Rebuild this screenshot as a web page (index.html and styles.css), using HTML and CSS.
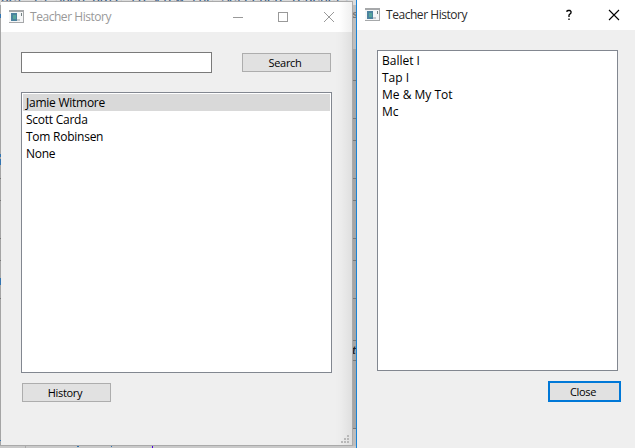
FILE: index.html
```
<!DOCTYPE html>
<html lang="en">
<head>
<meta charset="utf-8">
<title>Teacher History</title>
<link rel="stylesheet" href="styles.css">
</head>
<body>
<svg class="backdrop" width="635" height="448" viewBox="0 0 635 448" shape-rendering="crispEdges">
  <rect width="635" height="448" fill="#a5a5a5"/>
  <rect width="356" height="5" fill="#dcdcdc"/>
  <rect x="352" y="5" width="4" height="44" fill="#bdbdbd"/>
  <rect x="0" y="446" width="356" height="2" fill="#c9c9c9"/>
  <rect x="353" y="429" width="3" height="17" fill="#bcbcbc"/>
  <text class="backdrop-text" x="1" y="3" textLength="350">act is such date to view the Screened Teacher.</text>
  <path d="M352 80.500h4M352 118.500h4M352 140.500h4M352 178.500h4M352 200.500h4M352 238.500h4M352 260.500h4M352 298.500h4M352 340.500h4M352 360.500h4M352 428.500h4M0 178.500h1M0 200.500h1M0 238.500h1M0 260.500h1M0 298.500h1" stroke="#777"/>
  <path d="M0 14h1v4h-1zM0 154h1v3h-1zM0 159h1v6h-1zM0 278h1v7h-1zM0 440h1v1h-1zM77 446h2v1h-2zM111 446h1v1h-1z" fill="#3274b0"/>
  <rect x="152" y="446" width="1" height="2" fill="#5000e0"/>
  <rect x="25" y="446" width="1" height="2" fill="#aaa"/>
  <text class="backdrop-mark" x="352" y="354">t</text>
  <text class="backdrop-mark faint" x="352" y="18">s</text>
</svg>

<section class="window search-window">
  <header class="titlebar">
    <svg class="app-icon" width="16" height="13" viewBox="0 0 16 13" shape-rendering="crispEdges">
      <rect width="15" height="13" fill="#a6a8aa"/><rect y="2" width="14" height="10" fill="#f5f6f7"/>
      <rect x="2" y="3" width="6" height="8" fill="#4b829e"/><path d="M4 5h3v4H4z" fill="#56a59b"/><path d="M8 9h3v2H8z" fill="#c6cacd"/><path d="M12 3h1v3h-1z" fill="#718081"/>
    </svg>
    <h1 class="title">Teacher History</h1>
    <svg class="controls" width="103" height="12" viewBox="0 0 103 12" fill="none" stroke="currentColor">
      <path d="M0 6.500h10"/><rect x="45.500" y="1.500" width="9" height="9"/><path d="M91 1l10 10M101 1l-10 10"/>
    </svg>
  </header>
  <div class="search-row">
    <input class="search-field" type="text" aria-label="Teacher name">
    <button class="button search-button">Search</button>
  </div>
  <ul class="list teacher-list">
    <li class="item selected">Jamie Witmore</li>
    <li class="item">Scott Carda</li>
    <li class="item">Tom Robinsen</li>
    <li class="item">None</li>
  </ul>
  <button class="button history-button">History</button>
  <svg class="size-grip" width="9" height="8" viewBox="0 0 9 8" fill="#b8b8b8" shape-rendering="crispEdges">
    <path d="M6 0h2v2H6zM3 3h2v2H3zM6 3h2v2H6zM0 6h2v2H0zM3 6h2v2H3zM6 6h2v2H6z"/>
  </svg>
</section>

<section class="window history-window">
  <header class="titlebar">
    <svg class="app-icon" width="16" height="13" viewBox="0 0 16 13" shape-rendering="crispEdges">
      <rect width="15" height="13" fill="#a6a8aa"/><rect y="2" width="14" height="10" fill="#f5f6f7"/>
      <rect x="2" y="3" width="6" height="8" fill="#4b829e"/><path d="M4 5h3v4H4z" fill="#56a59b"/><path d="M8 9h3v2H8z" fill="#c6cacd"/><path d="M12 3h1v3h-1z" fill="#718081"/>
    </svg>
    <h1 class="title">Teacher History</h1>
    <svg class="controls" width="54" height="12" viewBox="0 0 54 12" fill="none" stroke="currentColor">
      <path d="M1 3V2L2 1.500H4L5 2.500V4L3 6V8M3 9.500V11" stroke-width="1.300"/>
      <path d="M43 1l10 10M53 1l-10 10" stroke-width="1.100"/>
    </svg>
  </header>
  <ul class="list class-list">
    <li class="item">Ballet I</li>
    <li class="item">Tap I</li>
    <li class="item">Me &amp; My Tot</li>
    <li class="item">Mc</li>
  </ul>
  <button class="button close-button">Close</button>
</section>
</body>
</html>
```
FILE: styles.css
```
* { box-sizing: border-box; }
body {
  margin: 0;
  width: 635px;
  height: 448px;
  position: relative;
  overflow: hidden;
  font-family: "Open Sans", sans-serif;
  font-size: 12px;
  color: #000;
}
.backdrop { display: block; }
.backdrop-text { font: 14px "Liberation Mono", monospace; fill: #365b86; }
.backdrop-mark { font: italic bold 11px "Liberation Sans", sans-serif; fill: #222; }
.faint { fill: #777; }
.window {
  position: absolute;
  display: flex;
  flex-direction: column;
  background: #efefef;
}
.search-window {
  left: 1px;
  top: 1px;
  width: 352px;
  height: 445px;
  border: solid #aaa;
  border-width: 1px 1px 1px 0;
  background: linear-gradient(90deg, #efefef 334px, #ececec 340px, #dfdfdf 351px);
}
.history-window {
  left: 356px;
  top: 0;
  width: 279px;
  height: 448px;
  border-left: 1px solid #1883d7;
}
.titlebar {
  display: flex;
  align-items: center;
  height: 30px;
  padding-left: 8px;
  padding-bottom: 1px;
  background: #fff;
  color: #2b2b2b;
}
.search-window .titlebar {
  color: #999;
  background: linear-gradient(90deg, #fff 338px, #efefef 351px);
}
.title {
  margin: 0 0 0 5px;
  font: 12px "Open Sans", sans-serif;
  letter-spacing: -0.45px;
  white-space: nowrap;
}
.controls { margin-left: auto; }
.search-window .controls { margin-right: 16px; }
.history-window .controls { margin-right: 15px; color: #000; }
.search-row {
  display: flex;
  align-items: center;
  justify-content: space-between;
  margin: 20px 21px 0 20px;
}
.search-field {
  width: 191px;
  height: 21px;
  padding: 0 4px;
  border: 1px solid #7a7a7a;
  background: #fff;
}
.button {
  display: flex;
  align-items: center;
  justify-content: center;
  height: 19px;
  padding: 0 3px 0 0;
  border: 1px solid #adadad;
  background: #e1e1e1;
  color: #000;
  font: 11px "Open Sans", sans-serif;
  letter-spacing: -0.3px;
}
.search-button, .history-button { width: 89px; }
.history-button { margin: 10px 0 0 21px; }
.close-button {
  align-self: flex-end;
  width: 73px;
  height: 21px;
  margin: 10px 14px 0 0;
  border: 2px solid #0078d7;
}
.list {
  margin: 0;
  padding: 1px;
  border: 1px solid #828790;
  background: #fff;
  list-style: none;
}
.teacher-list { width: 311px; height: 281px; margin: 19px 0 0 20px; letter-spacing: -0.25px; }
.class-list { width: 241px; height: 321px; margin: 20px 0 0 20px; }
.item { height: 17px; padding-left: 3px; line-height: 17px; white-space: nowrap; }
.selected { background: #d9d9d9; }
.size-grip { position: absolute; right: 2px; bottom: 2px; }
```
